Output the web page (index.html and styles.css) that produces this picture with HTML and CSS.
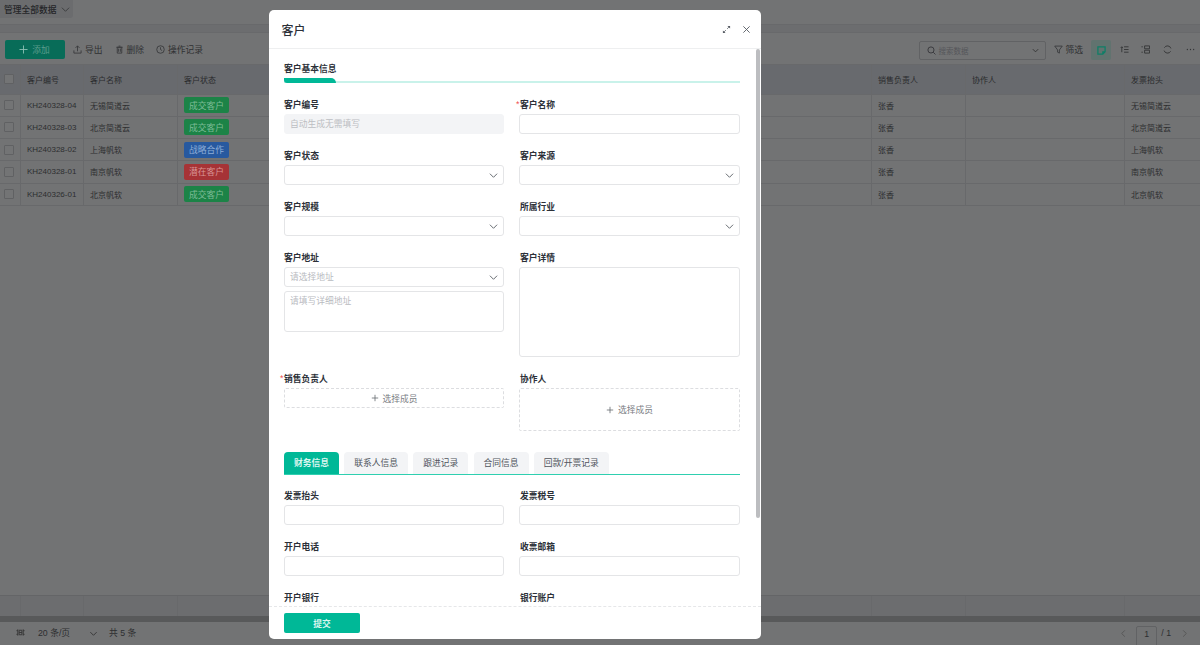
FILE: index.html
```html
<!DOCTYPE html>
<html lang="zh-CN">
<head>
<meta charset="utf-8">
<title>客户</title>
<link rel="stylesheet" href="styles.css">
</head>
<body>
<div class="page">
  <div class="topbar"><div class="scope"><span>管理全部数据</span><svg class="ico10" viewBox="0 0 10 10"><path d="M1 3l4 4 4-4"/></svg></div></div>
  <div class="strip"></div>
  <div class="toolbar">
    <button class="add"><svg class="ico10 plus" viewBox="0 0 10 10"><path d="M5 .5v9M.5 5h9"/></svg>添加</button>
    <span class="tool t1"><svg class="ico10" viewBox="0 0 10 10"><path d="M5 7V1M2.800 3.200L5 1l2.200 2.200M1 6v3h8V6"/></svg>导出</span>
    <span class="tool"><svg class="ico10" viewBox="0 0 10 10"><path d="M1.500 2.500h7M4 1.200h2M2.500 2.500h5v6.500h-5zM4 4v3.500M6 4v3.500"/></svg>删除</span>
    <span class="tool"><svg class="ico10" viewBox="0 0 10 10"><circle cx="5" cy="5" r="4.200"/><path d="M5 2.500V5l1.800 1.200"/></svg>操作记录</span>
    <span class="grow"></span>
    <div class="search"><svg class="ico10" viewBox="0 0 10 10"><circle cx="4.400" cy="4.400" r="3.400"/><path d="M7 7l2.400 2.400"/></svg><span class="ph">搜索数据</span><svg class="ico10 end" viewBox="0 0 10 10"><path d="M2 3.500l3 3 3-3"/></svg></div>
    <span class="tool filter"><svg class="ico10" viewBox="0 0 10 10"><path d="M.8 1.200h8.400L6 5.500v3.500L4 8V5.500z"/></svg>筛选</span>
    <span class="note"><svg class="ico10" viewBox="0 0 10 10"><path d="M1 1h8v5.500L6.500 9H1zM6.500 9V6.500H9"/></svg></span>
    <svg class="ico10 tico t-a" viewBox="0 0 10 10"><path d="M4.500 2H9.500M4.500 5H9.500M4.500 8H9.500M2 8V2M.8 3.200L2 2l1.200 1.200"/></svg>
    <svg class="ico10 tico t-b" viewBox="0 0 10 10"><path d="M.5 2h1.500M.5 8h1.500M4 1h5.500v3.200H4zM4 5.800h5.500V9H4z"/></svg>
    <svg class="ico10 tico t-c" viewBox="0 0 10 10"><path d="M8.800 3.800A4 4 0 0 0 1.500 3M1.200 6.200A4 4 0 0 0 8.500 7"/></svg>
    <svg class="ico10 tico dots" viewBox="0 0 10 10"><circle cx="1.500" cy="5" r=".7"/><circle cx="5" cy="5" r=".7"/><circle cx="8.500" cy="5" r=".7"/></svg>
  </div>
  <div class="table">
    <div class="row head">
      <div class="cell"><i class="chk"></i></div><div class="cell">客户编号</div><div class="cell">客户名称</div><div class="cell">客户状态</div><div class="cell">销售负责人</div><div class="cell">协作人</div><div class="cell">发票抬头</div>
    </div>
    <div class="row">
      <div class="cell"><i class="chk"></i></div><div class="cell">KH240328-04</div><div class="cell">无锡简道云</div><div class="cell"><span class="tag green">成交客户</span></div><div class="cell">张香</div><div class="cell"></div><div class="cell">无锡简道云</div>
    </div>
    <div class="row">
      <div class="cell"><i class="chk"></i></div><div class="cell">KH240328-03</div><div class="cell">北京简道云</div><div class="cell"><span class="tag green">成交客户</span></div><div class="cell">张香</div><div class="cell"></div><div class="cell">北京简道云</div>
    </div>
    <div class="row">
      <div class="cell"><i class="chk"></i></div><div class="cell">KH240328-02</div><div class="cell">上海帆软</div><div class="cell"><span class="tag blue">战略合作</span></div><div class="cell">张香</div><div class="cell"></div><div class="cell">上海帆软</div>
    </div>
    <div class="row">
      <div class="cell"><i class="chk"></i></div><div class="cell">KH240328-01</div><div class="cell">南京帆软</div><div class="cell"><span class="tag red">潜在客户</span></div><div class="cell">张香</div><div class="cell"></div><div class="cell">南京帆软</div>
    </div>
    <div class="row">
      <div class="cell"><i class="chk"></i></div><div class="cell">KH240326-01</div><div class="cell">北京帆软</div><div class="cell"><span class="tag green">成交客户</span></div><div class="cell">张香</div><div class="cell"></div><div class="cell">北京帆软</div>
    </div>
    <div class="table-fill"></div>
    <div class="row summary"><div class="cell"></div><div class="cell"></div><div class="cell"></div><div class="cell"></div><div class="cell"></div><div class="cell"></div><div class="cell"></div></div>
  </div>
  <div class="hscroll"></div>
  <div class="pager">
    <svg class="ico10 p-layout" viewBox="0 0 10 10"><path d="M2 1.500v7M8 1.500v7M3.500 2.500h3v5h-3zM3.500 5h3M.5 3h1.500M.5 7h1.500M8 3h1.500M8 7h1.500"/></svg>
    <span class="p-size">20 条/页</span>
    <svg class="ico10 p-chev" viewBox="0 0 10 10"><path d="M1.500 3.500L5 7l3.500-3.500"/></svg>
    <span class="p-total">共 5 条</span>
    <span class="grow"></span>
    <svg class="ico10 p-prev" viewBox="0 0 10 10"><path d="M6.500 1.500L3 5l3.500 3.500"/></svg>
    <span class="p-cur">1</span>
    <span class="p-all">/ 1</span>
    <svg class="ico10 p-next" viewBox="0 0 10 10"><path d="M3.500 1.500L7 5 3.500 8.500"/></svg>
  </div>
</div>

<div class="scrim">
  <div class="modal">
    <div class="m-head">
      <span class="m-title">客户</span>
      <svg class="m-ico" viewBox="0 0 10 10"><path class="fill" d="M6 1h3v3zM1 6l3 3H1z"/><path d="M5.800 4.200L7.500 2.500M2.500 7.500L4.200 5.800"/></svg>
      <svg class="m-ico" viewBox="0 0 10 10"><path d="M1.500 1.500l7 7M8.500 1.500l-7 7"/></svg>
    </div>
    <div class="m-body">
      <div class="thumb"></div>
      <div class="sec-title">客户基本信息</div>
      <div class="sec-bar"><span class="sec-fill"></span></div>
      <div class="form">
        <div class="field"><label>客户编号</label><div class="input disabled">自动生成无需填写</div></div>
        <div class="field"><label class="req">客户名称</label><div class="input"></div></div>
        <div class="field"><label>客户状态</label><div class="input select"><svg class="chev" viewBox="0 0 10 10"><path d="M1 3l4 4 4-4"/></svg></div></div>
        <div class="field"><label>客户来源</label><div class="input select"><svg class="chev" viewBox="0 0 10 10"><path d="M1 3l4 4 4-4"/></svg></div></div>
        <div class="field"><label>客户规模</label><div class="input select"><svg class="chev" viewBox="0 0 10 10"><path d="M1 3l4 4 4-4"/></svg></div></div>
        <div class="field"><label>所属行业</label><div class="input select"><svg class="chev" viewBox="0 0 10 10"><path d="M1 3l4 4 4-4"/></svg></div></div>
        <div class="field"><label>客户地址</label><div class="input select ph">请选择地址<svg class="chev" viewBox="0 0 10 10"><path d="M1 3l4 4 4-4"/></svg></div><div class="input area addr ph">请填写详细地址</div></div>
        <div class="field"><label>客户详情</label><div class="input area detail"></div></div>
        <div class="field"><label class="req">销售负责人</label><div class="member short"><svg class="mplus" viewBox="0 0 10 10"><path d="M5 1v8M1 5h8"/></svg>选择成员</div></div>
        <div class="field"><label>协作人</label><div class="member tall"><svg class="mplus" viewBox="0 0 10 10"><path d="M5 1v8M1 5h8"/></svg>选择成员</div></div>
      </div>
      <div class="tabs">
        <span class="tab on">财务信息</span><span class="tab">联系人信息</span><span class="tab">跟进记录</span><span class="tab">合同信息</span><span class="tab">回款/开票记录</span>
      </div>
      <div class="form fin">
        <div class="field"><label>发票抬头</label><div class="input"></div></div>
        <div class="field"><label>发票税号</label><div class="input"></div></div>
        <div class="field"><label>开户电话</label><div class="input"></div></div>
        <div class="field"><label>收票邮箱</label><div class="input"></div></div>
        <div class="field"><label>开户银行</label><div class="input"></div></div>
        <div class="field"><label>银行账户</label><div class="input"></div></div>
      </div>
    </div>
    <div class="m-foot"><button class="submit">提交</button></div>
  </div>
</div>
</body>
</html>
```

FILE: styles.css
```css
* { box-sizing: border-box; }
html, body { margin: 0; height: 100%; overflow: hidden; }
body { font-family: "Liberation Sans", "Noto Sans CJK SC", sans-serif; font-size: 8px; color: #2b2c2e; background: #727374; }
svg { fill: none; stroke: currentColor; stroke-width: 1; flex: none; display: block; }
button { font: inherit; border: 0; padding: 0; }
.grow { flex: 1; }
.ico10 { width: 9px; height: 9px; }

.page { width: 1200px; height: 645px; display: flex; flex-direction: column; }
.topbar { height: 25px; border-bottom: 1px solid #68696b; }
.scope { width: 73px; height: 18px; padding-left: 4px; display: flex; align-items: center; gap: 4px; background: #6b6c6e; border-radius: 0 0 3px 0; font-size: 8.750px; font-weight: 500; color: #242528; }
.scope svg { color: #3a3b3d; }
.strip { height: 8px; background: #6c6d6f; border-bottom: 1px solid #68696b; }

.toolbar { height: 31px; padding: 7px 0 0 4.500px; display: flex; align-items: flex-start; }
.add { width: 60px; height: 19px; background: #086c58; border-radius: 2px; color: #5c9d8d; font-size: 8.750px; display: flex; align-items: center; justify-content: center; gap: 4px; }
.plus { color: #8cc0b3; }
.tool { margin-left: 12px; height: 19px; display: flex; align-items: center; gap: 3px; font-size: 8.750px; color: #2f3032; }
.tool svg { color: #3a3b3d; }
.t1 { margin-left: 8.500px; }
.search { width: 127px; height: 19px; margin-top: 1px; border: 1px solid #616264; border-radius: 2px; display: flex; align-items: center; gap: 3px; padding: 0 5px 0 7px; color: #35363a; }
.search .ph { flex: 1; font-size: 7.500px; color: #55565a; }
.search .end { color: #333; }
.filter { margin-left: 8px; }
.note { width: 20px; height: 20px; margin-left: 8px; background: #61736f; border-radius: 2px; display: flex; align-items: center; justify-content: center; color: #0e7f67; }
.note svg { stroke-width: 1.400; }
.tico { margin-top: 5px; color: #333436; }
.t-a { margin-left: 8.500px; }
.t-b { margin-left: 12.500px; }
.t-c { margin-left: 13px; }
.tico.dots { margin: 5px 5px 0 14px; fill: currentColor; stroke: none; }

.table { flex: 1; display: flex; flex-direction: column; }
.row { display: grid; grid-template-columns: 20px 63px 94px 694px 94px 159px 76px; height: 22.250px; border-bottom: 1px solid #68696b; flex: none; }
.row.head { height: 30.500px; background: #686a6e; border-top: 1px solid #68696b; }
.row.summary { height: 21px; margin-top: auto; background: #6c6d6f; border-top: 1px solid #646567; border-bottom: 0; }
.table-fill { flex: 1; }
.cell { padding-left: 6px; display: flex; align-items: center; border-left: 1px solid #68696b; white-space: nowrap; font-size: 8px; color: #2d2e30; overflow: hidden; }
.cell:first-child { padding-left: 4px; border-left: 0; }
.head .cell { color: #2a2b2d; }
.chk { width: 10px; height: 10px; border: 1px solid #606163; border-radius: 1px; background: #737475; }
.tag { width: 45px; height: 16px; border-radius: 2px; display: flex; align-items: center; justify-content: center; font-size: 8.750px; }
.green { background: #1c8347; color: #7ebd97; }
.blue { background: #27599f; color: #8eaed8; }
.red { background: #a63336; color: #d99595; }

.hscroll { height: 6px; background: #58595a; flex: none; }
.pager { height: 23px; flex: none; padding: 4px 0 0 16px; display: flex; align-items: flex-start; color: #2d2e30; font-size: 8.750px; line-height: 14px; overflow: hidden; }
.p-layout { margin-top: 2px; color: #333; }
.p-size { margin-left: 13px; }
.p-chev { margin: 3px 0 0 19px; color: #333; }
.p-total { margin-left: 11px; }
.p-prev { margin-top: 3px; color: #555; }
.p-cur { width: 21px; height: 24px; margin-left: 8px; border: 1px solid #616264; border-radius: 2px; text-align: center; }
.p-all { margin-left: 4px; }
.p-next { margin: 3px 11px 0 9px; color: #555; }

.scrim { position: absolute; inset: 0; padding: 10px 0 0 269px; }
.modal { width: 492px; height: 629px; background: #fff; border-radius: 5px; display: flex; flex-direction: column; overflow: hidden; color: #2c3038; }
.m-head { height: 39px; flex: none; border-bottom: 1px solid #eeeff0; padding: 0 10px 0 12.500px; display: flex; align-items: center; gap: 11px; }
.m-title { flex: 1; font-size: 12px; font-weight: 500; }
.m-ico { width: 9px; height: 9px; color: #555a62; }
.m-ico .fill { fill: currentColor; stroke: none; }
.m-body { position: relative; flex: 1; min-height: 0; overflow: hidden; padding: 13px 21px 0 15px; font-size: 8.750px; }
.thumb { position: absolute; top: 0; right: 1px; width: 4px; height: 469px; background: #bcbdc0; border-radius: 2px; }
.sec-title { height: 15px; line-height: 15px; font-weight: 700; }
.sec-bar { margin-top: 1px; height: 5px; display: flex; align-items: flex-start; border-bottom: 2px solid #c9f2ea; }
.sec-fill { width: 52px; height: 5px; flex: none; background: #00b897; border-radius: 0 5px 0 3px; }
.form { margin-top: 15px; display: grid; grid-template-columns: 220px 221px; column-gap: 15px; row-gap: 15px; }
.fin { margin-top: 14px; }
.field { display: flex; flex-direction: column; min-width: 0; }
label { height: 14px; margin-bottom: 2px; line-height: 14px; font-weight: 700; }
.field:nth-child(even) label { margin-left: 1px; }
.req { position: relative; }
.req::before { content: "*"; position: absolute; left: -4px; top: -1px; color: #ef4d4d; font-weight: 400; }
.input { position: relative; height: 20px; border: 1px solid #e4e5e7; border-radius: 3px; background: #fff; padding-left: 5px; line-height: 18px; white-space: nowrap; }
.ph { color: #b9bbbf; }
.disabled { border-color: #f3f4f6; background: #f3f4f6; color: #bcbec2; }
.chev { position: absolute; right: 5px; top: 4.500px; width: 9px; height: 9px; color: #585c63; }
.addr { height: 40.500px; margin-top: 4px; line-height: 18px; }
.detail { height: 90px; }
.member { border: 1px dashed #dcdde0; border-radius: 2px; display: flex; align-items: center; justify-content: center; gap: 4px; color: #7a7d83; }
.mplus { width: 8px; height: 8px; color: #666a70; }
.short { height: 20px; }
.tall { height: 43px; }
.tabs { margin-top: 21px; display: flex; gap: 5.250px; height: 23px; border-bottom: 1px solid #2fcfb0; }
.tab { height: 22px; padding: 0 10px; line-height: 23px; background: #f3f4f6; border-radius: 4px 4px 0 0; color: #50555d; }
.tab.on { background: #00b897; color: #dcf6f0; font-weight: 700; }
.m-foot { height: 33px; flex: none; border-top: 1px dashed #e6e7e9; padding: 6px 0 0 15px; }
.submit { display: block; width: 76px; height: 20px; border-radius: 2px; background: #00b897; color: #d9f5ef; font-size: 8.750px; font-weight: 700; }
```
